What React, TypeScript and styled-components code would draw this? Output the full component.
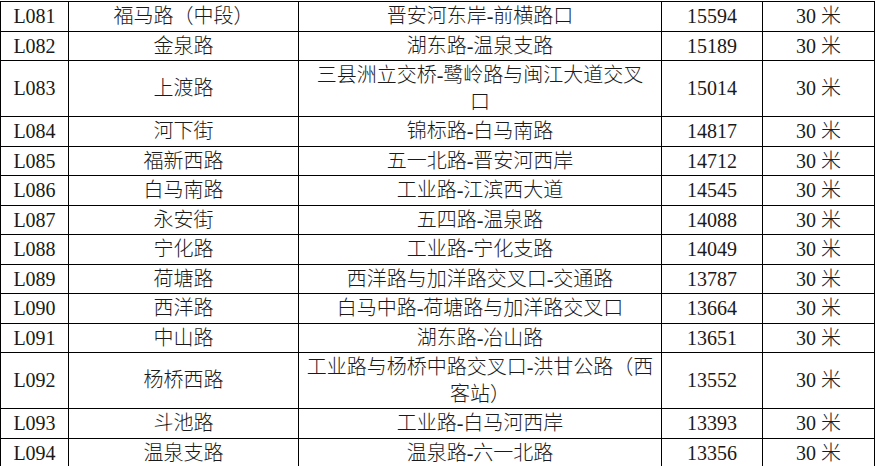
import React from 'react'
import styled, { createGlobalStyle } from 'styled-components'

const GlobalStyle = createGlobalStyle`
    html, body {
        margin: 0;
        padding: 0;
        background: #fff;
    }
`

const Table = styled.table`
    width: 874px;
    margin-top: 1px;
    border-collapse: collapse;
    table-layout: fixed;
    font-family: "Liberation Serif", "Noto Sans CJK SC", serif;
    font-size: 20px;
    font-weight: 300;
    line-height: 26.5px;
    color: #1a1a1a;
`

const Col = styled.col<{w: number}>`
    ${({w}) => `width: ${w}px;`}
`

const Cell = styled.td`
    border: 1px solid #000;
    padding: 1px 7px;
    text-align: center;
    vertical-align: middle;
    white-space: nowrap;
`

type Road = {
    id: string
    name: string
    segment: string[]
    flow: number
    width: string
}

const roads: Road[] = [
    {id: 'L081', name: '福马路（中段）', segment: ['晋安河东岸-前横路口'], flow: 15594, width: '30 米'},
    {id: 'L082', name: '金泉路', segment: ['湖东路-温泉支路'], flow: 15189, width: '30 米'},
    {id: 'L083', name: '上渡路', segment: ['三县洲立交桥-鹭岭路与闽江大道交叉', '口'], flow: 15014, width: '30 米'},
    {id: 'L084', name: '河下街', segment: ['锦标路-白马南路'], flow: 14817, width: '30 米'},
    {id: 'L085', name: '福新西路', segment: ['五一北路-晋安河西岸'], flow: 14712, width: '30 米'},
    {id: 'L086', name: '白马南路', segment: ['工业路-江滨西大道'], flow: 14545, width: '30 米'},
    {id: 'L087', name: '永安街', segment: ['五四路-温泉路'], flow: 14088, width: '30 米'},
    {id: 'L088', name: '宁化路', segment: ['工业路-宁化支路'], flow: 14049, width: '30 米'},
    {id: 'L089', name: '荷塘路', segment: ['西洋路与加洋路交叉口-交通路'], flow: 13787, width: '30 米'},
    {id: 'L090', name: '西洋路', segment: ['白马中路-荷塘路与加洋路交叉口'], flow: 13664, width: '30 米'},
    {id: 'L091', name: '中山路', segment: ['湖东路-冶山路'], flow: 13651, width: '30 米'},
    {id: 'L092', name: '杨桥西路', segment: ['工业路与杨桥中路交叉口-洪甘公路（西', '客站）'], flow: 13552, width: '30 米'},
    {id: 'L093', name: '斗池路', segment: ['工业路-白马河西岸'], flow: 13393, width: '30 米'},
    {id: 'L094', name: '温泉支路', segment: ['温泉路-六一北路'], flow: 13356, width: '30 米'},
]

const App = () => {
    return (
        <>
            <GlobalStyle />
            <Table>
                <colgroup>
                    <Col w={68} />
                    <Col w={230} />
                    <Col w={363} />
                    <Col w={101} />
                    <Col w={112} />
                </colgroup>
                <tbody>
                    {roads.map(road => (
                        <tr key={road.id}>
                            <Cell>{road.id}</Cell>
                            <Cell>{road.name}</Cell>
                            <Cell>
                                {road.segment.map((line, i) => (
                                    <React.Fragment key={i}>
                                        {i > 0 && <br />}
                                        {line}
                                    </React.Fragment>
                                ))}
                            </Cell>
                            <Cell>{road.flow}</Cell>
                            <Cell>{road.width}</Cell>
                        </tr>
                    ))}
                </tbody>
            </Table>
        </>
    )
}

export default App
